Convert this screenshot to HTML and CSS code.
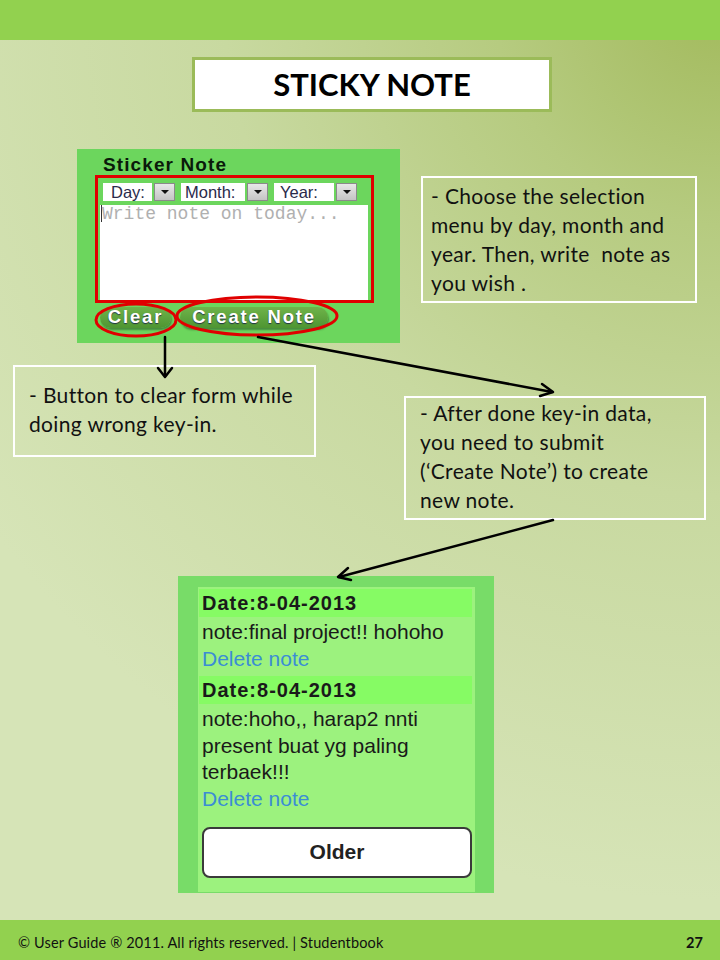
FILE: index.html
```html
<!DOCTYPE html>
<html>
<head>
<meta charset="utf-8">
<link rel="stylesheet" href="styles.css">
</head>
<body>
<div class="slide">
  <header class="topbar"></header>
  <main class="canvas">
    <div class="title-box">STICKY NOTE</div>

    <div class="shot1">
      <div class="st-title">Sticker Note</div>
      <div class="redbox">
        <div class="selects">
          <span class="sel"><span class="sel-label day">Day:</span><span class="sel-btn"><i class="tri"></i></span></span>
          <span class="sel"><span class="sel-label month">Month:</span><span class="sel-btn"><i class="tri"></i></span></span>
          <span class="sel"><span class="sel-label year">Year:</span><span class="sel-btn"><i class="tri"></i></span></span>
        </div>
        <div class="textarea"><span class="caret"></span>Write note on today...</div>
      </div>
      <div class="btns">
        <span class="gbtn clear">Clear</span>
        <span class="gbtn create">Create Note</span>
      </div>
    </div>

    <div class="callout c1">- Choose the selection<br>menu by day, month and<br>year. Then, write&nbsp; note as<br>you wish .</div>
    <div class="callout c2">- Button to clear form while<br>doing wrong key-in.</div>
    <div class="callout c3">- After done key-in data,<br>you need to submit<br>(‘Create Note’) to create<br>new note.</div>

    <div class="shot2">
      <div class="notes">
        <div class="date">Date:8-04-2013</div>
        <div class="ntext">note:final project!! hohoho</div>
        <div class="del">Delete note</div>
        <div class="date">Date:8-04-2013</div>
        <div class="ntext">note:hoho,, harap2 nnti<br>present buat yg paling<br>terbaek!!!</div>
        <div class="del">Delete note</div>
        <div class="older">Older</div>
      </div>
    </div>
  </main>
  <footer class="footer">
    <span class="copy">© User Guide ® 2011. All rights reserved. | Studentbook</span>
    <span class="pg">27</span>
  </footer>

  <svg class="overlay" width="720" height="960" viewBox="0 0 720 960">
    <g fill="none" stroke="#e00000" stroke-width="3">
      <ellipse cx="136" cy="320" rx="40" ry="16"/>
      <ellipse cx="257" cy="316" rx="80" ry="19"/>
    </g>
    <g fill="none" stroke="#000" stroke-width="2.5" stroke-linecap="round" stroke-linejoin="round">
      <line x1="165" y1="337" x2="165" y2="376"/>
      <polyline points="158,368 165,377 172,368"/>
      <line x1="258" y1="337" x2="552" y2="392"/>
      <polyline points="540,396 553,392 542,384"/>
      <line x1="553" y1="520" x2="339" y2="577"/>
      <polyline points="348,568 338,577 351,580"/>
    </g>
  </svg>
</div>
</body>
</html>
```
FILE: styles.css
```css
* { box-sizing: border-box; }
html, body { margin: 0; padding: 0; }
body { width: 720px; height: 960px; overflow: hidden; }

.slide {
  position: relative;
  width: 720px;
  height: 960px;
  display: flex;
  flex-direction: column;
  background: radial-gradient(ellipse 900px 900px at 100% 0%, #a2ba5c 0%, #b6cb80 25%, #c8d9a0 55%, #d6e4b7 100%);
  font-family: Lato, "Open Sans", sans-serif;
}

.topbar { height: 40px; background: #92d14f; flex: none; }
.canvas { position: relative; flex: 1; }
.footer {
  height: 40px;
  flex: none;
  background: #92d14f;
  display: flex;
  align-items: center;
  justify-content: space-between;
  padding: 4px 17px 0 18px;
  font-size: 14.5px;
  letter-spacing: 0.15px;
  color: #111;
}
.footer .pg { font-weight: bold; }

.title-box {
  position: absolute;
  left: 192px;
  top: 17px;
  width: 360px;
  height: 55px;
  background: #fff;
  border: 3px solid #9bbb59;
  display: flex;
  align-items: center;
  justify-content: center;
  font-weight: bold;
  font-size: 31px;
  color: #000;
  padding-bottom: 1px;
}

/* screenshot 1 */
.shot1 {
  position: absolute;
  left: 77px;
  top: 109px;
  width: 323px;
  height: 194px;
  background: #6cd65d;
  padding-top: 6px;
  font-family: "Liberation Sans", Arial, sans-serif;
}
.st-title {
  margin-left: 26px;
  font-weight: bold;
  font-size: 19px;
  line-height: 20px;
  letter-spacing: 1.1px;
  color: #0a1a0a;
}
.redbox {
  margin-left: 18px;
  width: 279px;
  height: 128px;
  border: 3px solid #e00000;
  padding: 5px 3px 2px 2px;
}
.selects { display: flex; gap: 6px; height: 18px; margin-left: 3px; }
.sel { display: flex; gap: 2px; }
.sel-label {
  background: #fff;
  font-size: 16.5px;
  line-height: 18px;
  padding-left: 8px;
  color: #2a2a4a;
}
.sel-label.day { width: 49px; }
.sel-label.month { width: 64px; padding-left: 4px; }
.sel-label.year { width: 60px; padding-left: 6px; }
.sel-btn {
  width: 21px;
  height: 18px;
  background: linear-gradient(#e8e8e8, #c4c4c4);
  border: 1px solid #8a8a8a;
  display: flex;
  align-items: center;
  justify-content: center;
}
.tri {
  width: 0; height: 0;
  border-left: 4px solid transparent;
  border-right: 4px solid transparent;
  border-top: 4px solid #111;
}
.textarea {
  margin-top: 4px;
  height: 95px;
  background: #fff;
  font-family: "Liberation Mono", monospace;
  font-size: 18px;
  line-height: 18px;
  color: #b0b0b0;
  padding: 0 1px;
  position: relative;
}
.caret { display: inline-block; width: 1px; height: 17px; background: #333; vertical-align: -3px; margin-right: 0; }
.btns { display: flex; gap: 9px; margin: 4px 0 0 23px; }
.gbtn {
  height: 21px;
  line-height: 20px;
  border-radius: 11px;
  background: linear-gradient(#6fb34a, #4e9532);
  color: #fff;
  font-weight: bold;
  font-size: 18.5px;
  letter-spacing: 1.8px;
  text-align: center;
  text-shadow: 0 1px 1px #234;
  box-shadow: 1px 2px 2px rgba(0,0,0,0.35);
}
.gbtn.clear { width: 71px; }
.gbtn.create { width: 148px; }

/* callouts */
.callout {
  position: absolute;
  border: 2px solid #fff;
  font-size: 21px;
  letter-spacing: 0.35px;
  line-height: 29px;
  color: #111;
  white-space: nowrap;
}
.c1 { left: 421px; top: 136px; width: 276px; height: 127px; padding: 3px 0 0 8px; }
.c2 { left: 13px; top: 325px; width: 303px; height: 92px; padding: 13px 0 0 14px; }
.c3 { left: 404px; top: 356px; width: 302px; height: 124px; padding: 0 0 0 14px; }

/* screenshot 2 */
.shot2 {
  position: absolute;
  left: 178px;
  top: 536px;
  width: 316px;
  height: 317px;
  background: #78dc68;
  padding: 11px 19px 1px 20px;
  font-family: "Liberation Sans", Arial, sans-serif;
}
.notes {
  height: 100%;
  background: #9cf27e;
  padding: 2px 3px 0 1px;
  color: #1a1a1a;
}
.date {
  background: #86fb64;
  font-weight: bold;
  font-size: 20px;
  line-height: 28px;
  letter-spacing: 1px;
  padding-left: 3px;
}
.date + .ntext { margin-top: 2px; }
.ntext, .del {
  font-size: 21px;
  line-height: 26.6px;
  padding-left: 3px;
}
.del { color: #3b8dd4; margin-bottom: 4px; }
.older {
  margin: 14px 0 0 3px;
  height: 51px;
  background: #fff;
  border: 2px solid #3a3a3a;
  border-radius: 8px;
  display: flex;
  align-items: center;
  justify-content: center;
  font-weight: bold;
  font-size: 21px;
  color: #222;
}

.overlay { position: absolute; left: 0; top: 0; pointer-events: none; }
```
